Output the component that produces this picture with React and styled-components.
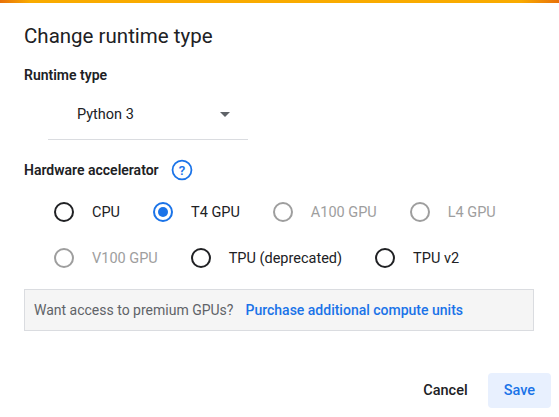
import React from "react";
import styled, { createGlobalStyle } from "styled-components";

const G = createGlobalStyle`
  body { margin:0; background:#fff; font-family: Roboto, "Liberation Sans", sans-serif; }
`;
const Page = styled.div`width:559px;height:417px;position:relative;overflow:hidden;background:#fff;`;
const TopBar = styled.div`height:3px;background:linear-gradient(90deg,#e8710a 0,#f9ab00 30px,#f9ab00 520px,#e8710a 100%);`;
const Body = styled.div`padding:19px 24px 0 24px;`;
const Title = styled.h1`margin:0;font-size:20.5px;font-weight:400;color:#202124;line-height:28px;`;
const Label = styled.div`font-size:14px;font-weight:600;color:#202124;display:flex;align-items:center;gap:10px;margin-top:${p=>p.$mt}px;line-height:18px;`;
const Select = styled.div`margin:6px 0 0 24px;width:200px;height:50px;border-bottom:1px solid #dadce0;display:flex;align-items:center;justify-content:space-between;padding:0 18px 0 29px;box-sizing:border-box;font-size:14.5px;color:#202124;`;
const Caret = styled.div`width:0;height:0;border-left:5px solid transparent;border-right:5px solid transparent;border-top:5px solid #5f6368;`;
const Help = styled.svg`margin-left:2px;`;
const Rows = styled.div`padding-left:30px;margin-top:21px;display:flex;flex-direction:column;gap:26px;`;
const Row = styled.div`display:flex;gap:33px;align-items:center;`;
const Item = styled.div`display:flex;align-items:center;gap:18px;font-size:14.5px;color:${p=>p.$dis?"#9e9e9e":"#202124"};`;
const Circle = styled.div`width:20px;height:20px;box-sizing:border-box;border-radius:50%;border:2px solid ${p=>p.$dis?"#9e9e9e":p.$on?"#1a73e8":"#202124"};display:flex;align-items:center;justify-content:center;
  &::after{content:"";width:10px;height:10px;border-radius:50%;background:#1a73e8;display:${p=>p.$on?"block":"none"};}`;
const Info = styled.div`margin-top:21px;height:42px;width:510px;box-sizing:border-box;background:#f5f5f5;border:1px solid #dadce0;display:flex;align-items:center;padding-left:9px;gap:12px;font-size:14px;color:#5f6368;`;
const Link = styled.span`color:#1a73e8;font-weight:500;`;
const Footer = styled.div`position:absolute;right:8px;top:373px;display:flex;align-items:center;gap:20px;`;
const Btn = styled.div`font-size:14.5px;font-weight:500;color:${p=>p.$p?"#1a73e8":"#202124"};background:${p=>p.$p?"#e8f0fe":"transparent"};height:35px;padding:0 ${p=>p.$p?16:0}px;display:flex;align-items:center;border-radius:4px;`;

const R = ({t,on,dis}) => <Item $dis={dis}><Circle $on={on} $dis={dis}/>{t}</Item>;

export default function App(){
  return <Page><G/><TopBar/>
    <Body>
      <Title>Change runtime type</Title>
      <Label $mt={16}>Runtime type</Label>
      <Select>Python 3<Caret/></Select>
      <Label $mt={19}>Hardware accelerator
        <Help width="22" height="22" viewBox="0 0 20 20"><circle cx="10" cy="10" r="8.6" fill="none" stroke="#1a73e8" strokeWidth="1.6"/><text x="10" y="14.3" textAnchor="middle" fontSize="12" fontWeight="600" fill="#1a73e8" fontFamily="Roboto, sans-serif">?</text></Help>
      </Label>
      <Rows>
        <Row><R t="CPU"/><R t="T4 GPU" on/><R t="A100 GPU" dis/><R t="L4 GPU" dis/></Row>
        <Row><R t="V100 GPU" dis/><R t="TPU (deprecated)"/><R t="TPU v2"/></Row>
      </Rows>
      <Info>Want access to premium GPUs?<Link>Purchase additional compute units</Link></Info>
    </Body>
    <Footer><Btn>Cancel</Btn><Btn $p>Save</Btn></Footer>
  </Page>;
}
